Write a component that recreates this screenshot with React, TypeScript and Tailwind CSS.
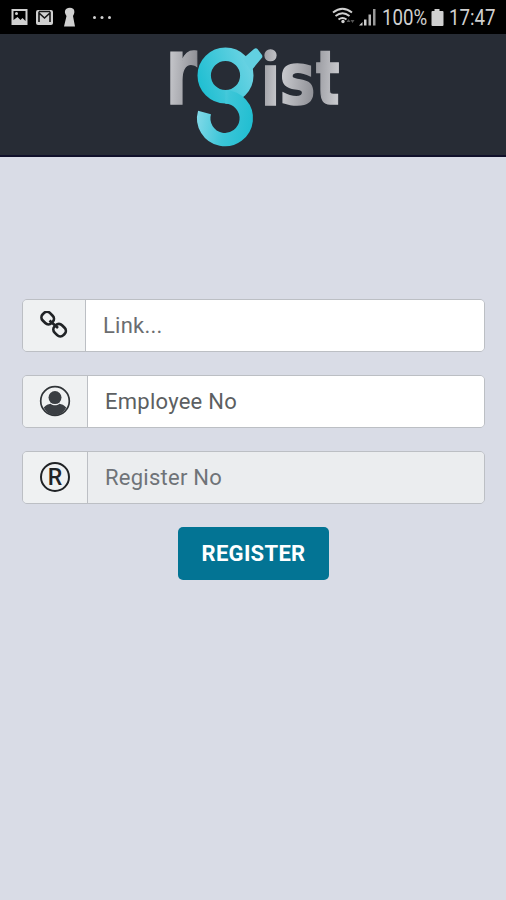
import React from "react";

interface FieldProps {
    placeholder: string,
    icon: React.ReactNode,
    addonClass: string,
    inputClass: string,
}

const LinkIcon = () => (
    <svg width="30" height="30" viewBox="0 0 30 30" fill="none" stroke="#202326" strokeWidth="2.7">
        <rect x="2.500" y="1.900" width="12.400" height="10.400" rx="4.400" transform="rotate(45 8.700 7.100)"/>
        <rect x="14.400" y="14" width="12.400" height="10.400" rx="4.400" transform="rotate(45 20.600 19.200)"/>
        <path d="M10.500 9.500l8.500 7.500"/>
    </svg>
);

const UserIcon = () => (
    <svg className="-mt-px" width="32" height="32" viewBox="0 0 32 32">
        <circle cx="16" cy="16" r="14.300" fill="none" stroke="#303438" strokeWidth="1.700"/>
        <circle cx="16" cy="12.600" r="6.500" fill="#3a3e43"/>
        <path d="M4.800 22.500c2-2.500 4.600-3.300 6.800-3.700 2.500 2 6.300 2 8.800 0 2.200.4 4.800 1.200 6.800 3.700C25 27.500 20.500 30 16 30S7 27.500 4.800 22.500z" fill="#3a3e43"/>
    </svg>
);

const RegisteredIcon = () => (
    <span className="-mt-px flex h-[30px] w-[30px] items-center justify-center rounded-full border-2 border-[#202326] text-[23px] leading-none font-medium text-[#202326]">
        R
    </span>
);

const Logo = () => (
    <svg className="overflow-visible" width="176" height="106" viewBox="165 44 176 106">
        <defs>
            <linearGradient id="silver" x1="0" y1="0" x2="1" y2="0.2">
                <stop offset="0" stopColor="#d2d3d7"/>
                <stop offset="1" stopColor="#929399"/>
            </linearGradient>
            <linearGradient id="silverBack" x1="0" y1="0" x2="1" y2="0.2">
                <stop offset="0" stopColor="#96979d"/>
                <stop offset="1" stopColor="#c8c9cd"/>
            </linearGradient>
            <linearGradient id="ring" gradientUnits="userSpaceOnUse" x1="200" y1="85" x2="256" y2="65">
                <stop offset="0" stopColor="#21bfd2"/>
                <stop offset="1" stopColor="#72d5e5"/>
            </linearGradient>
            <linearGradient id="hook" gradientUnits="userSpaceOnUse" x1="198" y1="112" x2="254" y2="122">
                <stop offset="0" stopColor="#80d9e8"/>
                <stop offset="0.5" stopColor="#3cc6d8"/>
                <stop offset="1" stopColor="#20bed1"/>
            </linearGradient>
        </defs>
        <g fontFamily="'DejaVu Sans', sans-serif" fontWeight="700" strokeWidth="1.600">
            <text x="165.500" y="104.200" fontSize="95" textLength="31.500" lengthAdjust="spacingAndGlyphs" fill="url(#silver)" stroke="url(#silver)">r</text>
            <text x="261.500" y="104.500" fontSize="74" fontFamily="Roboto, sans-serif" textLength="18" lengthAdjust="spacingAndGlyphs" fill="url(#silverBack)" stroke="url(#silverBack)">i</text>
            <text x="279.500" y="103.500" fontSize="72" textLength="36" lengthAdjust="spacingAndGlyphs" fill="url(#silver)" stroke="url(#silver)">s</text>
            <text x="316" y="104.200" fontSize="75" textLength="23.500" lengthAdjust="spacingAndGlyphs" fill="url(#silverBack)" stroke="url(#silverBack)">t</text>
        </g>
        <circle cx="225.500" cy="75.500" r="21.300" fill="none" stroke="url(#ring)" strokeWidth="13.400"/>
        <path d="M243 58.500l11-9.500q2-1.500 3.500 0l4.500 6q1 1.800-.5 3.200L251 71z" fill="#62d0e1"/>
        <path d="M204.500 112.500A21.300 21.300 0 1 0 225.500 97" fill="none" stroke="url(#hook)" strokeWidth="13.400"/>
    </svg>
);

const StatusBar = () => (
    <section className="flex h-[34px] w-full items-center bg-black text-[#d0d0d0]">
        <svg width="120" height="34" viewBox="0 0 120 34" fill="#d0d0d0">
            <path fillRule="evenodd" d="M11.500 9h16v16h-16zM13.500 11v9l4-3 3 3 2-2 3 3V11z"/>
            <circle cx="16.500" cy="13.500" r="1.500"/>
            <rect x="36" y="10" width="17" height="15" rx="2"/>
            <path d="M39 22v-9l5.500 5 5.500-5v9M39 11.500h11" fill="none" stroke="#151515" strokeWidth="1.600"/>
            <path d="M66 9q4-2.500 7.500 0 2 3-.5 7l2 10.500H64L66.500 16q-3-4-.5-7z"/>
            <circle cx="94.500" cy="17.500" r="1.500"/>
            <circle cx="102" cy="17.500" r="1.500"/>
            <circle cx="109.500" cy="17.500" r="1.500"/>
        </svg>
        <svg className="ml-[210px]" width="50" height="34" viewBox="330 0 50 34" fill="#d0d0d0">
            <g fill="none" stroke="#d0d0d0" strokeWidth="1.900">
                <path d="M333 12.500q9.500-7.500 19 0M335.500 16q7-5.500 14 0M338.500 19.500q4-3 8 0"/>
            </g>
            <circle cx="343" cy="21.500" r="1.700"/>
            <path d="M346.500 22l2-3 2 3zM350.500 20l2 3 2-3z" fill="#555"/>
            <path d="M359 25.500l3.500-3.500v3.500zM364 19.500h2.500v6H364z"/>
            <path d="M368.500 14.500h2.500v11h-2.500z" fill="#b5b5b5"/>
            <path d="M373 9h2.500v16.500H373z" fill="#999"/>
        </svg>
        <span className="ml-[2px] mt-px w-[45px] origin-left scale-x-[0.85] text-[22px] whitespace-nowrap">100%</span>
        <svg className="ml-[4px]" width="13" height="34" viewBox="0 0 13 34" fill="#d0d0d0">
            <path d="M3.500 9h5v2h3q1 0 1 1v13q0 1-1 1H1.500q-1 0-1-1V12q0-1 1-1h2z"/>
        </svg>
        <span className="ml-[5px] mt-px origin-left scale-x-[0.85] text-[22px] whitespace-nowrap">17:47</span>
    </section>
);

const Field = ({placeholder, icon, addonClass, inputClass}: FieldProps) => (
    <div className="flex h-[53px] w-full overflow-hidden rounded-[5px] border border-[#bcbfc4]">
        <div className={`flex shrink-0 items-center justify-center border-r border-[#bcbfc4] bg-[#eff1f2] ${addonClass}`}>
            {icon}
        </div>
        <input
            type="text"
            placeholder={placeholder}
            className={`min-w-0 flex-1 px-[17px] text-[22px] tracking-[0.25px] outline-none ${inputClass}`}
        />
    </div>
);

export default function App() {
    return (
        <section className="flex h-[900px] w-full flex-col items-center overflow-hidden bg-[#d9dce6] font-[Roboto,sans-serif]">
            <StatusBar/>
            <header className="flex h-[123px] w-full justify-center border-b-2 border-[#10102a] bg-[#272c35] pt-[10px]">
                <Logo/>
            </header>

            <section className="mt-[142px] flex w-[464px] flex-col items-center gap-[23px] pl-px">
                <Field placeholder="Link..." icon={<LinkIcon/>} addonClass="w-[63px]" inputClass="bg-white placeholder:text-[#6b6d70]"/>
                <Field placeholder="Employee No" icon={<UserIcon/>} addonClass="w-[65px]" inputClass="bg-white placeholder:text-[#5c5f62]"/>
                <Field placeholder="Register No" icon={<RegisteredIcon/>} addonClass="w-[65px]" inputClass="bg-[#ebedef] placeholder:text-[#6f7378]"/>
                <button className="h-[53px] w-[151px] rounded-[5px] bg-[#037494] text-[22px] font-bold tracking-[0.3px] text-white">
                    REGISTER
                </button>
            </section>
        </section>
    );
}
